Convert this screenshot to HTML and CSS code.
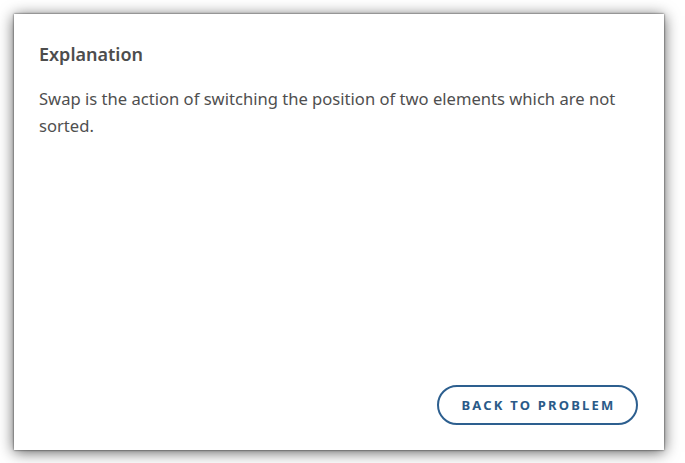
FILE: index.html
```html
<!DOCTYPE html>
<html>
<head>
<meta charset="utf-8">
<link rel="stylesheet" href="styles.css">
</head>
<body>
<div class="card">
  <div class="content">
    <h2 class="title">Explanation</h2>
    <p class="text">Swap is the action of switching the position of two elements which are not sorted.</p>
  </div>
  <div class="actions">
    <button class="back-btn">BACK TO PROBLEM</button>
  </div>
</div>
</body>
</html>
```
FILE: styles.css
```css
html, body {
  margin: 0;
  padding: 0;
  background: #ffffff;
}
body {
  padding: 14px 21px 13px 14px;
  font-family: "Noto Sans", "Open Sans", sans-serif;
}
.card {
  width: 650px;
  height: 436px;
  background: #ffffff;
  box-shadow: 0 0 2px rgba(0,0,0,0.7), 0 2px 14px rgba(0,0,0,0.65);
  box-sizing: border-box;
  padding: 40px 26px 25px 25px;
  display: flex;
  flex-direction: column;
}
.content {
  flex: 1;
}
.title {
  margin: 0;
  font-size: 18px;
  font-weight: 600;
  color: #4d4d4d;
  line-height: 20px;
  margin-top: -10px;
}
.text {
  margin: 21px 0 0 0;
  font-size: 16.6px;
  line-height: 27px;
  color: #4f4f4f;
}
.actions {
  display: flex;
  justify-content: flex-end;
}
.back-btn {
  width: 201px;
  height: 40px;
  border: 2px solid #2d5f8f;
  border-radius: 20px;
  background: #ffffff;
  color: #2a5a88;
  font-family: "Noto Sans", sans-serif;
  font-weight: 700;
  font-size: 13px;
  letter-spacing: 2.2px;
  padding: 0 0 0 2px;
}
```
